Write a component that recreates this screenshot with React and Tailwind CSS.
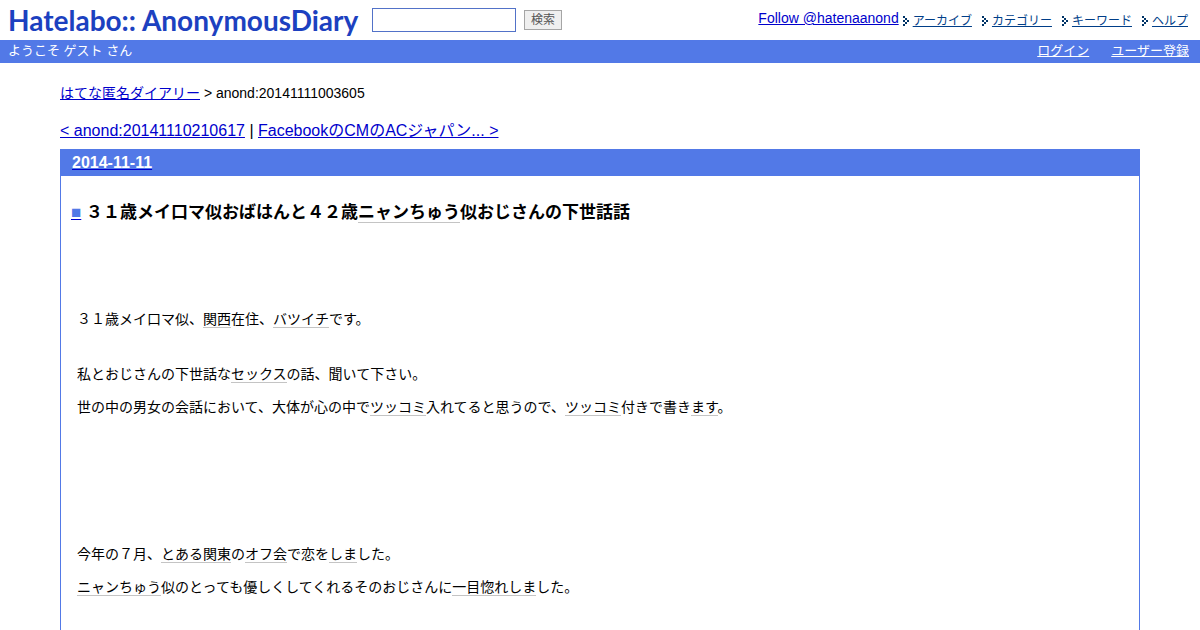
import React from "react";

const navItems = ["アーカイブ", "カテゴリー", "キーワード", "ヘルプ"];

function Keyword({ children }) {
  return (
    <a href="#keyword" className="border-b border-[#c4c4c4] text-black">
      {children}
    </a>
  );
}

function Arrow() {
  return (
    <svg width="6" height="10" viewBox="0 0 6 10" fill="#003366" shapeRendering="crispEdges" aria-hidden="true">
      <path d="M0 0h2v2h-2zM2 2h2v2h-2zM4 4h2v2h-2zM2 6h2v2h-2zM0 8h2v2h-2zM0 4h2v2h-2z" />
    </svg>
  );
}

function Header() {
  return (
    <header>
      <div className="flex h-10 items-center pr-3 pl-2">
        <a href="#top" className="w-[356px] shrink-0 font-['Lato','Liberation_Sans',sans-serif] text-[28px] leading-8 font-bold whitespace-nowrap text-[#1c41c0]">
          Hatelabo:: AnonymousDiary
        </a>
        <form className="ml-2 flex items-center gap-2" onSubmit={(e) => e.preventDefault()}>
          <input type="text" aria-label="検索語" className="h-6 w-36 border border-[#5272c8] bg-white px-1 text-sm outline-none" />
          <button type="submit" className="flex h-5 items-center border border-[#a5a5a5] bg-[#efefef] px-1.5 text-xs leading-4 text-[#555]">
            検索
          </button>
        </form>
        <nav className="ml-auto flex items-center gap-1 pb-1">
          <a href="#follow" className="text-sm text-[#0000cc] underline">Follow @hatenaanond</a>
          <ul className="flex gap-2.5 pt-1.5">
            {navItems.map((item) => (
              <li key={item} className="flex items-center gap-1">
                <Arrow />
                <a href="#nav" className="text-xs text-[#003e88] underline">{item}</a>
              </li>
            ))}
          </ul>
        </nav>
      </div>
      <div className="flex h-[23px] items-center justify-between bg-[#5279e7] pr-[11px] pb-0.5 pl-2 text-[13px] leading-5 text-white">
        <span>ようこそ ゲスト さん</span>
        <div className="flex gap-[22px]">
          <a href="#login" className="underline">ログイン</a>
          <a href="#register" className="underline">ユーザー登録</a>
        </div>
      </div>
    </header>
  );
}

export default function App() {
  return (
    <div className="min-h-screen bg-white font-['Liberation_Sans','Noto_Sans_CJK_JP',sans-serif] text-black">
      <Header />
      <main className="mx-[60px] pt-5">
        <div className="text-sm leading-5">
          <a href="#home" className="text-[#0000cc] underline">はてな匿名ダイアリー</a> &gt; anond:20141111003605
        </div>
        <div className="mt-4 text-base leading-6">
          <a href="#prev" className="text-[#0000cc] underline">&lt; anond:20141110210617</a>
          {" | "}
          <a href="#next" className="text-[#0000cc] underline">FacebookのCMのACジャパン... &gt;</a>
        </div>
        <article className="mt-1.5 border border-[#5279e7] pb-16">
          <h2 className="bg-[#5279e7] px-[11px] text-base leading-[26px] font-bold">
            <a href="#date" className="text-white underline decoration-[#0000cc]">2014-11-11</a>
          </h2>
          <div className="px-2.5 pt-[25px]">
            <h3 className="text-[17px] leading-6 font-bold">
              <a href="#entry" className="text-[#5279e7] underline decoration-[#0000cc]">■</a>{" "}
              ３１歳メイ口マ似おばはんと４２歳<Keyword>ニャンちゅう</Keyword>似おじさんの下世話話
            </h3>
            <div className="px-1.5 pt-[83px] text-sm leading-[22px]">
              <p className="mb-[33px]">
                ３１歳メイ口マ似、<Keyword>関西</Keyword>在住、<Keyword>バツイチ</Keyword>です。
              </p>
              <p className="mb-[11px]">
                私とおじさんの下世話な<Keyword>セックス</Keyword>の話、聞いて下さい。
              </p>
              <p className="mb-[125px]">
                世の中の男女の会話において、大体が心の中で<Keyword>ツッコミ</Keyword>入れてると思うので、<Keyword>ツッコミ</Keyword>付きで書き<Keyword>ます</Keyword>。
              </p>
              <p className="mb-[11px]">
                今年の７月、<Keyword>とある</Keyword><Keyword>関東</Keyword>の<Keyword>オフ会</Keyword>で恋を<Keyword>しま</Keyword>した。
              </p>
              <p>
                <Keyword>ニャンちゅう</Keyword>似のとっても優しくしてくれるそのおじさんに<Keyword>一目惚れ</Keyword><Keyword>しま</Keyword>した。
              </p>
            </div>
          </div>
        </article>
      </main>
    </div>
  );
}
